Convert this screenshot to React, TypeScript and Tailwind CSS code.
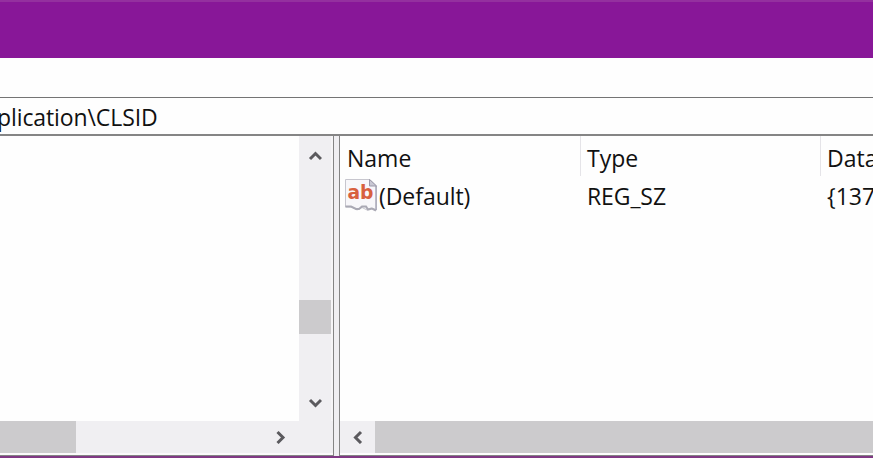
import type { ReactNode } from 'react';

function Chevron({ d, className = '' }: { d: string; className?: string }) {
  return (
    <svg viewBox="0 0 14 14" className={`size-3.5 shrink-0 ${className}`} fill="none" stroke="#5b5a5e" strokeWidth="3">
      <path d={d} />
    </svg>
  );
}

function StringValueIcon() {
  return (
    <svg viewBox="0 0 34 34" className="h-[34px] w-[34px] shrink-0">
      <path d="M1.5 0.5H26L32.5 7V31L27 29L23 31L18 28.5L13 31L8 28L1.5 28Z" fill="#f8f7fa" stroke="#c7c6ce" />
      <path d="M1.5 27.5H7L12 30L15 30L18 27.5H22L24 30.5L28 29.5L32 31.5" fill="none" stroke="#aaa9b4" strokeWidth="2" />
      <path d="M32 7V31" stroke="#aaa9b8" strokeWidth="1.5" />
      <path d="M25.5 0.5V7H32.5Z" fill="#c9c8d4" stroke="#9c9aab" />
      <text x="3.5" y="20" fill="#d8603f" fontSize="19" fontWeight="700" fontFamily="DejaVu Sans, sans-serif" textLength="26" lengthAdjust="spacingAndGlyphs">ab</text>
    </svg>
  );
}

function Cell({ className = '', children }: { className?: string; children: ReactNode }) {
  return <div className={`flex shrink-0 items-center whitespace-nowrap ${className}`}>{children}</div>;
}

export default function App() {
  return (
    <div className="flex h-[458px] w-[873px] flex-col overflow-hidden bg-[#fefefe] font-['Open_Sans','Noto_Sans',sans-serif] text-[23px] leading-[32px] text-[#111]">
      <header className="h-[58px] shrink-0 border-t-2 border-[#94309f] bg-[#881798]" />
      <div className="h-[39px] shrink-0" />
      <div className="flex h-[39px] shrink-0 items-center border-t border-b-2 border-t-[#747474] border-b-[#858585] pt-0.5">
        <span className="-ml-[3px] whitespace-nowrap tracking-[-0.1px]">plication\CLSID</span>
      </div>
      <main className="flex h-[320px] shrink-0 bg-[#f0eff2]">
        <section className="flex w-[334px] shrink-0 flex-col border-r border-b border-[#858585]">
          <div className="flex h-[285px]">
            <div className="w-[299px] bg-[#fefefe]" />
            <div className="flex w-8 flex-col items-center bg-[#f0eff2]">
              <Chevron d="M2 10L7.5 4.5L13 10" className="mt-[13px]" />
              <div className="mt-[137px] h-[34px] w-8 bg-[#cccbcd]" />
              <Chevron d="M2 4L7.5 9.5L13 4" className="mt-[62px]" />
            </div>
            <div className="w-0.5 bg-[#f6f5f7]" />
          </div>
          <div className="flex h-8 items-center">
            <div className="h-8 w-[76px] bg-[#cccbcd]" />
            <Chevron d="M4.5 2L10 7.5L4.5 13" className="ml-[197px]" />
          </div>
          <div className="h-0.5 bg-[#fbfafb]" />
        </section>
        <div className="w-[5px] shrink-0 bg-[#f0eff2]" />
        <section className="flex w-[534px] shrink-0 flex-col border-b border-l border-[#858585] bg-[#fefefe]">
          <div className="flex h-10 shrink-0">
            <Cell className="w-[241px] border-r border-[#e5e4e8] pt-1 pl-[7px]">Name</Cell>
            <Cell className="w-[240px] border-r border-[#e5e4e8] pt-1 pl-[6px]">Type</Cell>
            <Cell className="w-[52px] overflow-hidden pt-1 pl-[6px]">Data</Cell>
          </div>
          <div className="flex h-[38px] shrink-0 pt-0.5">
            <Cell className="w-[241px] pl-1"><StringValueIcon /><span className="ml-px tracking-[-0.05px]">(Default)</span></Cell>
            <Cell className="w-[240px] pl-[6px] tracking-[-0.1px]">REG_SZ</Cell>
            <Cell className="w-[52px] overflow-hidden pl-[6px]">{'{137'}</Cell>
          </div>
          <div className="h-[207px]" />
          <div className="flex h-8 items-center bg-[#f0eff2]">
            <Chevron d="M10 2L4.5 7.5L10 13" className="ml-[11px]" />
            <div className="ml-[10px] h-8 flex-1 bg-[#cccbcd]" />
          </div>
        </section>
      </main>
      <footer className="h-0.5 shrink-0 bg-[#803984]" />
    </div>
  );
}
